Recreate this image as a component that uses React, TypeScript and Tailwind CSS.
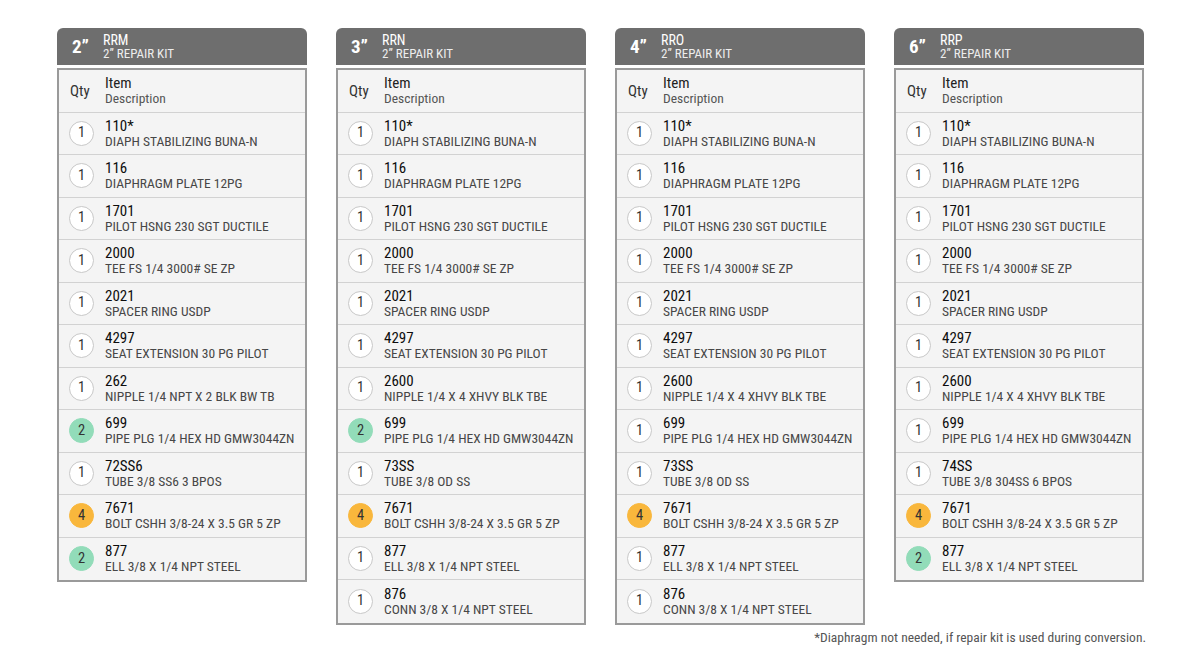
import React from "react";

type Item = { qty: number; code: string; desc: string };

const base: Item[] = [
  { qty: 1, code: "110*", desc: "DIAPH STABILIZING BUNA-N" },
  { qty: 1, code: "116", desc: "DIAPHRAGM PLATE 12PG" },
  { qty: 1, code: "1701", desc: "PILOT HSNG 230 SGT DUCTILE" },
  { qty: 1, code: "2000", desc: "TEE FS 1/4 3000# SE ZP" },
  { qty: 1, code: "2021", desc: "SPACER RING USDP" },
  { qty: 1, code: "4297", desc: "SEAT EXTENSION 30 PG PILOT" },
];

const kits: { size: string; code: string; items: Item[] }[] = [
  {
    size: "2”",
    code: "RRM",
    items: [
      ...base,
      { qty: 1, code: "262", desc: "NIPPLE 1/4 NPT X 2 BLK BW TB" },
      { qty: 2, code: "699", desc: "PIPE PLG 1/4 HEX HD GMW3044ZN" },
      { qty: 1, code: "72SS6", desc: "TUBE 3/8 SS6 3 BPOS" },
      { qty: 4, code: "7671", desc: "BOLT CSHH 3/8-24 X 3.5 GR 5 ZP" },
      { qty: 2, code: "877", desc: "ELL 3/8 X 1/4 NPT STEEL" },
    ],
  },
  {
    size: "3”",
    code: "RRN",
    items: [
      ...base,
      { qty: 1, code: "2600", desc: "NIPPLE 1/4 X 4 XHVY BLK TBE" },
      { qty: 2, code: "699", desc: "PIPE PLG 1/4 HEX HD GMW3044ZN" },
      { qty: 1, code: "73SS", desc: "TUBE 3/8 OD SS" },
      { qty: 4, code: "7671", desc: "BOLT CSHH 3/8-24 X 3.5 GR 5 ZP" },
      { qty: 1, code: "877", desc: "ELL 3/8 X 1/4 NPT STEEL" },
      { qty: 1, code: "876", desc: "CONN 3/8 X 1/4 NPT STEEL" },
    ],
  },
  {
    size: "4”",
    code: "RRO",
    items: [
      ...base,
      { qty: 1, code: "2600", desc: "NIPPLE 1/4 X 4 XHVY BLK TBE" },
      { qty: 1, code: "699", desc: "PIPE PLG 1/4 HEX HD GMW3044ZN" },
      { qty: 1, code: "73SS", desc: "TUBE 3/8 OD SS" },
      { qty: 4, code: "7671", desc: "BOLT CSHH 3/8-24 X 3.5 GR 5 ZP" },
      { qty: 1, code: "877", desc: "ELL 3/8 X 1/4 NPT STEEL" },
      { qty: 1, code: "876", desc: "CONN 3/8 X 1/4 NPT STEEL" },
    ],
  },
  {
    size: "6”",
    code: "RRP",
    items: [
      ...base,
      { qty: 1, code: "2600", desc: "NIPPLE 1/4 X 4 XHVY BLK TBE" },
      { qty: 1, code: "699", desc: "PIPE PLG 1/4 HEX HD GMW3044ZN" },
      { qty: 1, code: "74SS", desc: "TUBE 3/8 304SS 6 BPOS" },
      { qty: 4, code: "7671", desc: "BOLT CSHH 3/8-24 X 3.5 GR 5 ZP" },
      { qty: 2, code: "877", desc: "ELL 3/8 X 1/4 NPT STEEL" },
    ],
  },
];

function Badge({ qty }: { qty: number }) {
  const cls =
    qty === 4
      ? "bg-[#f9b73c] border-[#f9b73c]"
      : qty === 2
      ? "bg-[#92dcb9] border-[#92dcb9]"
      : "bg-white border-[#c8c8c8]";
  return (
    <div
      className={`w-[25px] h-[25px] rounded-full border-[1.5px] flex items-center justify-center text-[14.5px] text-[#333] shrink-0 ${cls}`}
    >
      {qty}
    </div>
  );
}

const font = { fontFamily: '"Roboto Condensed", "Liberation Sans Narrow", Roboto, sans-serif' };

export default function App() {
  return (
    <div className="w-[1200px] h-[647px] bg-white relative" style={font}>
      <div className="flex items-start gap-[29px] pl-[57px] pt-[28px]">
        {kits.map((k) => (
          <div key={k.code} className="w-[250px] flex flex-col gap-[3px]">
            <div className="h-[37px] bg-[#6e6e6e] rounded-t-[6px] flex items-center pl-[15px] text-white">
              <div className="w-[31px] text-[19px] font-bold leading-none">{k.size}</div>
              <div className="flex flex-col">
                <span className="text-[14px] leading-[14.5px]">{k.code}</span>
                <span className="text-[13px] leading-[13.5px] text-[#ededed]">2” REPAIR KIT</span>
              </div>
            </div>
            <div className="border-2 border-[#9a9a9a] bg-[#f4f4f4] flex flex-col">
              <div className="h-[42.5px] flex items-center border-b border-[#d2d2d2] pl-[11px]">
                <div className="w-[35px] text-[15px] text-[#333]">Qty</div>
                <div className="flex flex-col">
                  <span className="text-[15px] leading-[15px] text-[#222]">Item</span>
                  <span className="text-[13.5px] leading-[14px] text-[#555]">Description</span>
                </div>
              </div>
              {k.items.map((it, i) => (
                <div
                  key={i}
                  className={`h-[42.5px] flex items-center pl-[10px] ${
                    i < k.items.length - 1 ? "border-b border-[#d2d2d2]" : ""
                  }`}
                >
                  <div className="w-[36px]">
                    <Badge qty={it.qty} />
                  </div>
                  <div className="flex flex-col">
                    <span className="text-[15px] leading-[15px] text-[#0d0d0d]">{it.code}</span>
                    <span className="text-[13.5px] leading-[14px] text-[#474747]">{it.desc}</span>
                  </div>
                </div>
              ))}
            </div>
          </div>
        ))}
      </div>
      <div className="absolute right-[54px] top-[627px] text-[13.5px] text-[#555]">
        *Diaphragm not needed, if repair kit is used during conversion.
      </div>
    </div>
  );
}
